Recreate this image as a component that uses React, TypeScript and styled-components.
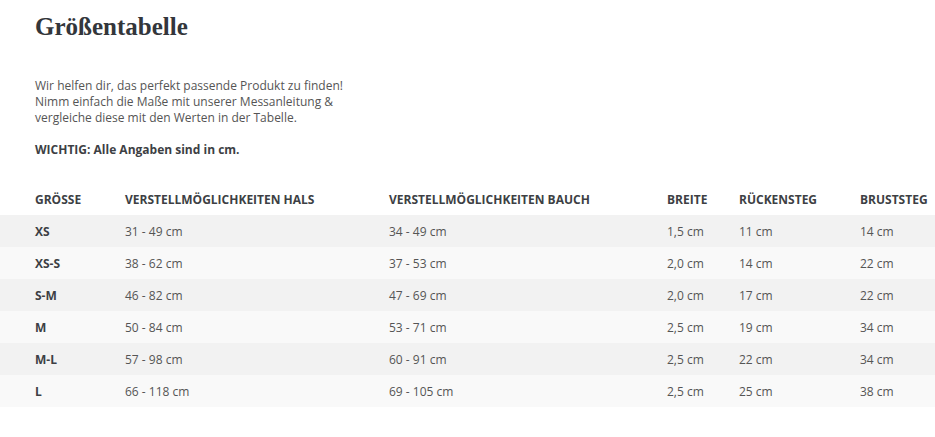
import React from "react";
import styled, { createGlobalStyle } from "styled-components";

const GlobalStyle = createGlobalStyle`
  html, body { margin: 0; padding: 0; background: #fff; }
  body { font-family: "Open Sans", "Liberation Sans", sans-serif; color: #555; }
`;

const Page = styled.div`
  width: 935px;
  padding-top: 12px;
`;

const Title = styled.h1`
  margin: 0 0 36px 35px;
  font-family: "Liberation Serif", "DejaVu Serif", serif;
  font-weight: 700;
  font-size: 25px;
  line-height: 30px;
  color: #33363b;
`;

const Intro = styled.p`
  margin: 0 0 0 35px;
  font-size: 12px;
  line-height: 16px;
  color: #555;
`;

const Note = styled.p`
  margin: 16px 0 25px 35px;
  font-size: 12px;
  line-height: 16px;
  font-weight: 700;
  color: #3d3f44;
`;

const Table = styled.table`
  width: 935px;
  border-collapse: collapse;
  table-layout: fixed;
  font-size: 12px;
`;

const HeadCell = styled.th`
  height: 32px;
  padding: 0 0 0 12px;
  text-align: left;
  font-weight: 700;
  color: #3d3f44;
  white-space: nowrap;
  &:first-child { padding-left: 35px; }
`;

const Row = styled.tr<{ $dark: boolean }>`
  background: ${(p) => (p.$dark ? "#f2f2f2" : "#f9f9f9")};
`;

const Cell = styled.td<{ $bold?: boolean }>`
  height: 32px;
  padding: 0 0 0 12px;
  color: ${(p) => (p.$bold ? "#3d3f44" : "#555")};
  font-weight: ${(p) => (p.$bold ? 700 : 400)};
  white-space: nowrap;
  &:first-child { padding-left: 35px; }
`;

const headers = [
  "GRÖSSE",
  "VERSTELLMÖGLICHKEITEN HALS",
  "VERSTELLMÖGLICHKEITEN BAUCH",
  "BREITE",
  "RÜCKENSTEG",
  "BRUSTSTEG",
];

const widths = [113, 264, 278, 72, 121, 87];

const rows = [
  ["XS", "31 - 49 cm", "34 - 49 cm", "1,5 cm", "11 cm", "14 cm"],
  ["XS-S", "38 - 62 cm", "37 - 53 cm", "2,0 cm", "14 cm", "22 cm"],
  ["S-M", "46 - 82 cm", "47 - 69 cm", "2,0 cm", "17 cm", "22 cm"],
  ["M", "50 - 84 cm", "53 - 71 cm", "2,5 cm", "19 cm", "34 cm"],
  ["M-L", "57 - 98 cm", "60 - 91 cm", "2,5 cm", "22 cm", "34 cm"],
  ["L", "66 - 118 cm", "69 - 105 cm", "2,5 cm", "25 cm", "38 cm"],
];

export default function App() {
  return (
    <>
      <GlobalStyle />
      <Page>
        <Title>Größentabelle</Title>
        <Intro>
          Wir helfen dir, das perfekt passende Produkt zu finden!
          <br />
          Nimm einfach die Maße mit unserer Messanleitung &amp;
          <br />
          vergleiche diese mit den Werten in der Tabelle.
        </Intro>
        <Note>WICHTIG: Alle Angaben sind in cm.</Note>
        <Table>
          <colgroup>
            {widths.map((w, i) => (
              <col key={i} style={{ width: w }} />
            ))}
          </colgroup>
          <thead>
            <tr>
              {headers.map((h) => (
                <HeadCell key={h}>{h}</HeadCell>
              ))}
            </tr>
          </thead>
          <tbody>
            {rows.map((r, i) => (
              <Row key={r[0]} $dark={i % 2 === 0}>
                {r.map((c, j) => (
                  <Cell key={j} $bold={j === 0}>
                    {c}
                  </Cell>
                ))}
              </Row>
            ))}
          </tbody>
        </Table>
      </Page>
    </>
  );
}
